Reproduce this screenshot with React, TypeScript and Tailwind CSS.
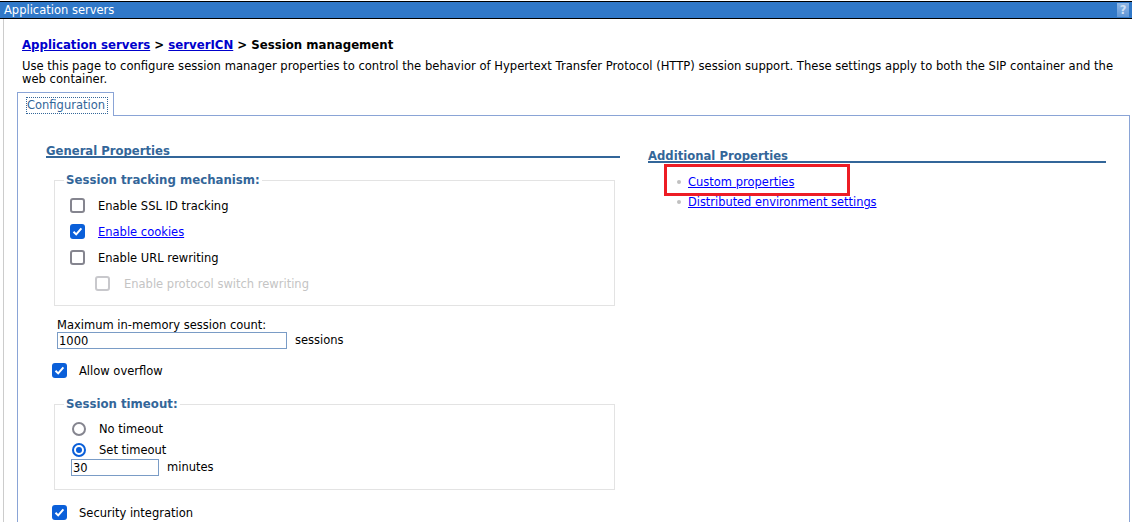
import React from "react";

const font = { fontFamily: '"DejaVu Sans", Verdana, sans-serif' };

function Box({ checked, disabled }: { checked?: boolean; disabled?: boolean }) {
  if (checked) {
    return (
      <span className="w-[15px] h-[15px] rounded-[3px] bg-[#0a5fd9] shrink-0 flex items-center justify-center">
        <svg width="11" height="11" viewBox="0 0 11 11" fill="none">
          <path d="M1.5 5.8 L4.2 8.4 L9.4 2.4" stroke="white" strokeWidth="2" />
        </svg>
      </span>
    );
  }
  return <span className={`w-[15px] h-[15px] rounded-[3px] border-2 shrink-0 bg-white ${disabled ? "border-[#c8c8cc]" : "border-[#85858f]"}`} />;
}

function Check({ label, checked, link, disabled, gap = "ml-[13px]", className = "" }: { label: string; checked?: boolean; link?: boolean; disabled?: boolean; gap?: string; className?: string }) {
  return (
    <div className={`flex items-center h-[15px] ${className}`}>
      <Box checked={checked} disabled={disabled} />
      {link ? (
        <a className={`${gap} mt-[1px] text-[#0000ff] underline`}>{label}</a>
      ) : (
        <span className={`${gap} mt-[1px] ${disabled ? "text-[#c4c4c4]" : "text-black"}`}>{label}</span>
      )}
    </div>
  );
}

function Radio({ label, checked, className = "" }: { label: string; checked?: boolean; className?: string }) {
  return (
    <div className={`flex items-center h-[15px] ${className}`}>
      <span className={`ml-[1px] w-[14px] h-[14px] rounded-full border-2 shrink-0 flex items-center justify-center ${checked ? "border-[#0a5fd9]" : "border-[#85858f]"}`}>
        {checked && <span className="w-[6px] h-[6px] rounded-full bg-[#0a5fd9]" />}
      </span>
      <span className="ml-[13px] mt-[2px]">{label}</span>
    </div>
  );
}

function Heading({ children }: { children: React.ReactNode }) {
  return <div className="font-bold text-[11.65px] text-[#336699] border-b-2 border-[#336699] leading-[13px] h-[15px] pt-[2px]">{children}</div>;
}

export default function App() {
  return (
    <div style={font} className="relative w-[1132px] h-[522px] overflow-hidden bg-white text-[11.5px] text-black leading-[13px]">
      <div className="mt-[1px] h-[18px] border-y border-black bg-[#3078c8] text-white flex items-center justify-between pl-[4px] pr-[3px]">
        <span>Application servers</span>
        <span className="w-[12px] h-[14px] bg-gradient-to-b from-[#8fb6e4] to-[#5f96d6] text-[#cfe0f4] font-bold text-center leading-[14px]">?</span>
      </div>
      <div className="ml-[3px] border-l border-[#cccccc] h-[503px] pl-[13px] pr-[2px]">
        <div className="pl-[5px] pt-[19px] text-[11.75px] font-bold leading-[14px]">
          <a className="text-[#0000cc] underline">Application servers</a> &gt; <a className="text-[#0000cc] underline">serverICN</a> &gt; Session management
        </div>
        <p className="pl-[5px] mt-[8px] text-[11.58px] leading-[13px] pr-[12px]">
          Use this page to configure session manager properties to control the behavior of Hypertext Transfer Protocol (HTTP) session support. These settings apply to both the SIP container and the web container.
        </p>
        <div className="mt-[6px] flex">
          <div className="h-[24px] w-[97px] border border-b-0 border-[#8aa4d6] bg-white relative z-10 -mb-px pl-[9px] pt-[5px] text-[#336699]">
            <span className="block w-[80px] h-[15px] leading-[15px] outline-1 outline-dotted outline-[#336699]">Configuration</span>
          </div>
        </div>
        <div className="border border-[#8aa4d6] h-[420px] flex pl-[28px] pt-[27px]">
          <div className="w-[574px] shrink-0">
            <Heading>General Properties</Heading>
            <fieldset className="ml-[8px] mr-[5px] mt-[15px] border border-[#e3e3e3] h-[133px] px-[15px] pt-[11px]">
              <legend className="-ml-[6px] px-[2px] font-bold text-[#336699] text-[11.75px] leading-[14px]">Session tracking mechanism:</legend>
              <Check label="Enable SSL ID tracking" />
              <Check label="Enable cookies" checked link className="mt-[11px]" />
              <Check label="Enable URL rewriting" className="mt-[11px]" />
              <Check label="Enable protocol switch rewriting" disabled gap="ml-[14px]" className="mt-[11px] ml-[25px]" />
            </fieldset>
            <div className="ml-[11px] mt-[13px]">Maximum in-memory session count:</div>
            <div className="ml-[11px] flex items-center">
              <input readOnly value="1000" className="w-[230px] h-[17px] border border-[#7a9cc6] px-[1px] text-[11.5px] outline-none" />
              <span className="ml-[8px]">sessions</span>
            </div>
            <Check label="Allow overflow" checked gap="ml-[12px]" className="ml-[6px] mt-[14px]" />
            <fieldset className="ml-[8px] mr-[5px] mt-[19px] border border-[#e3e3e3] h-[93px] px-[16px] pt-[10px]">
              <legend className="-ml-[7px] px-[2px] font-bold text-[#336699] text-[11.75px] leading-[14px]">Session timeout:</legend>
              <Radio label="No timeout" />
              <Radio label="Set timeout" checked className="mt-[6px]" />
              <div className="flex items-center mt-[2px]">
                <input readOnly value="30" className="w-[88px] h-[17px] border border-[#7a9cc6] px-[1px] text-[11.5px] outline-none" />
                <span className="ml-[8px]">minutes</span>
              </div>
            </fieldset>
            <Check label="Security integration" checked gap="ml-[12px]" className="ml-[6px] mt-[15px]" />
          </div>
          <div className="ml-[28px] w-[458px] shrink-0 pt-[5px]">
            <Heading>Additional Properties</Heading>
            <ul className="pl-[29px] pt-[12px]">
              <li className="flex items-center h-[14px]">
                <span className="w-[4px] h-[4px] rounded-full bg-[#c0c0c0] mr-[7px]" />
                <a className="text-[#0000ff] underline">Custom properties</a>
              </li>
              <li className="flex items-center h-[14px] mt-[6px]">
                <span className="w-[4px] h-[4px] rounded-full bg-[#c0c0c0] mr-[7px]" />
                <a className="text-[11.4px] text-[#0000ff] underline">Distributed environment settings</a>
              </li>
            </ul>
          </div>
        </div>
      </div>
      <div className="absolute left-[664px] top-[164px] w-[186px] h-[32px] border-[3px] border-[#ed1c24]" />
    </div>
  );
}
